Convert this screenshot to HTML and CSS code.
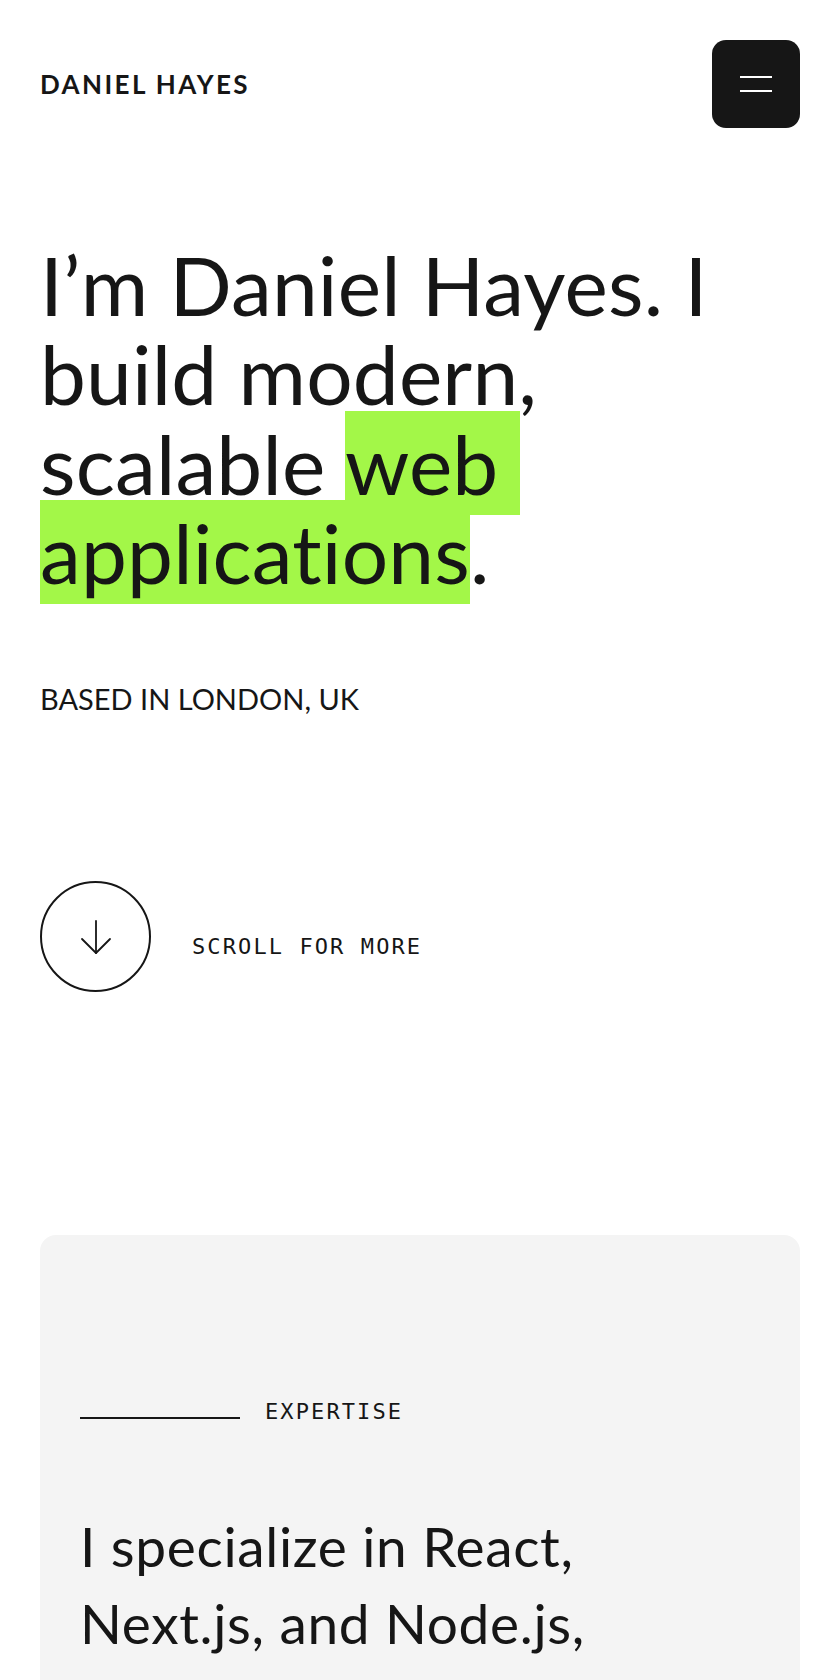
FILE: index.html
```html
<!DOCTYPE html>
<html>
<head>
    <link rel="stylesheet" href="styles.css">
</head>
<body>
    <header class="site-header">
        <a href="#" class="logo">DANIEL HAYES</a>
        <button class="menu-btn" aria-label="Open menu">
            <span></span>
            <span></span>
        </button>
    </header>

    <main>
        <section class="hero">
            <h1 class="hero-title">I’m Daniel Hayes. I build modern, scalable <span class="highlight">web applications</span>.</h1>
            <p class="hero-location">BASED IN LONDON, UK</p>

            <a href="#expertise" class="scroll-link">
                <span class="scroll-circle">
                    <svg width="32" height="36" viewBox="0 0 32 36" fill="none" stroke="currentColor" stroke-width="1.8" stroke-linecap="round" stroke-linejoin="round">
                        <path d="M16 2v32"/>
                        <path d="M2 20l14 14 14-14"/>
                    </svg>
                </span>
                <span class="scroll-text">SCROLL FOR MORE</span>
            </a>
        </section>

        <section class="expertise" id="expertise">
            <div class="section-label">
                <span class="label-line"></span>
                <span class="label-text">EXPERTISE</span>
            </div>
            <p class="expertise-text">I specialize in React, Next.js, and Node.js, delivering fast, accessible products for startups and growing teams.</p>
        </section>
    </main>
</body>
</html>
```

FILE: styles.css
```css
body {
    margin: 0;
    font-family: Lato, "Noto Sans", sans-serif;
    color: #161616;
    background-color: #fff;
}
a {
    color: inherit;
    text-decoration: none;
}

/* header */
.site-header {
    display: flex;
    justify-content: space-between;
    align-items: center;
    padding: 40px 40px 0;
}
.logo {
    font-size: 26px;
    font-weight: 700;
    letter-spacing: 2.4px;
}
.menu-btn {
    width: 88px;
    height: 88px;
    border: none;
    border-radius: 14px;
    background-color: #161616;
    display: flex;
    flex-direction: column;
    align-items: center;
    justify-content: center;
    gap: 12px;
    cursor: pointer;
}
.menu-btn span {
    display: block;
    width: 32px;
    height: 2px;
    background-color: #fff;
}

/* hero */
.hero {
    padding: 0 40px;
}
.hero-title {
    margin: 112px 0 0;
    font-size: 82px;
    font-weight: 400;
    line-height: 1.09;
    letter-spacing: 0.002em;
}
.highlight {
    background-color: #a3f748;
    padding: 3px 0;
    white-space: break-spaces;
}
.hero-location {
    margin: 81px 0 0;
    font-size: 29px;
    line-height: 1.4;
}
.scroll-link {
    display: flex;
    align-items: center;
    gap: 41px;
    margin-top: 162px;
}
.scroll-circle {
    width: 111px;
    height: 111px;
    box-sizing: border-box;
    border: 2px solid #161616;
    border-radius: 50%;
    display: flex;
    align-items: center;
    justify-content: center;
}
.scroll-text,
.label-text {
    font-family: "DejaVu Sans Mono", "Liberation Mono", monospace;
    font-size: 22px;
    line-height: 1.4;
    letter-spacing: 2.1px;
}
.scroll-text {
    margin-top: 22px;
}

/* expertise */
.expertise {
    margin: 243px 40px 0;
    padding: 162px 40px 80px;
    background-color: #f4f4f4;
    border-radius: 16px;
}
.section-label {
    display: flex;
    align-items: baseline;
    gap: 25px;
}
.label-line {
    display: inline-block;
    width: 160px;
    height: 2px;
    background-color: #161616;
}
.expertise-text {
    max-width: 600px;
    margin: 80px 0 0;
    font-size: 55px;
    line-height: 1.41;
    letter-spacing: 0.012em;
}
```
